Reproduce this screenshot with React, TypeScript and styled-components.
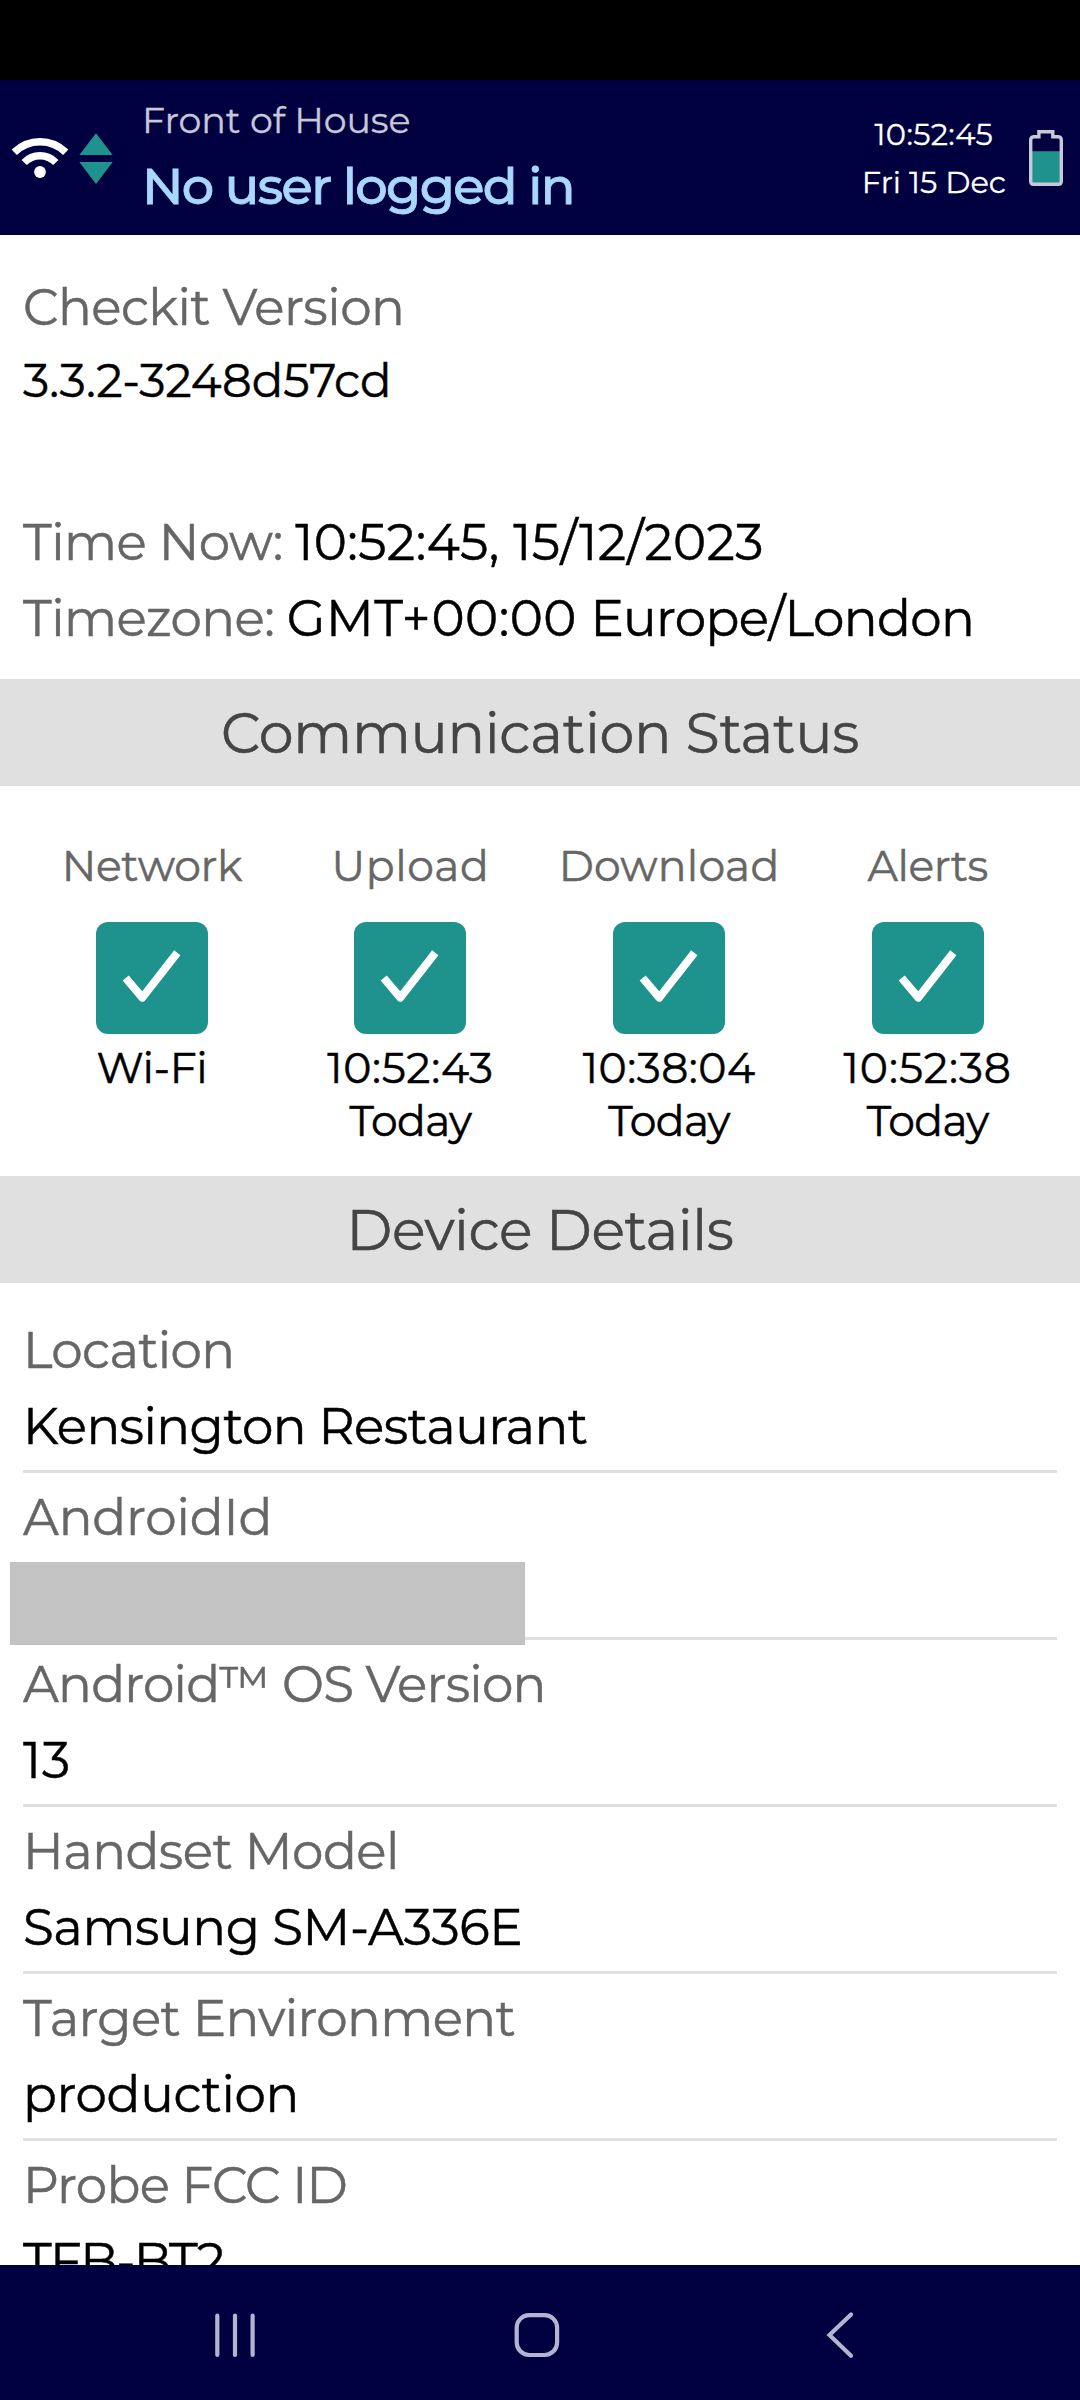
import React from "react";
import styled, { createGlobalStyle } from "styled-components";

const teal = "#1e938e";
const navy = "#000040";

const GlobalStyle = createGlobalStyle`
  *, *::before, *::after { box-sizing: border-box; }
  body {
    margin: 0;
    background: #fff;
    font-family: Montserrat, Inter, "Open Sans", sans-serif;
    font-weight: 400;
    -webkit-text-stroke: 0.5px currentColor;
  }
`;

const Screen = styled.div`
  display: flex;
  flex-direction: column;
  width: 1080px;
  height: 2400px;
  overflow: hidden;
  background: #fff;
`;

const StatusBar = styled.div`
  flex: none;
  height: 80px;
  background: #000;
`;

const Header = styled.header`
  flex: none;
  display: flex;
  align-items: flex-start;
  height: 155px;
  padding: 10px 17px 0 12px;
  background: ${navy};
  white-space: nowrap;
`;

const WifiIcon = styled.svg`
  flex: none;
  width: 56px;
  height: 41px;
  margin-top: 48px;
`;

const SyncIcon = styled.svg`
  flex: none;
  width: 34px;
  height: 51px;
  margin: 43px 0 0 11px;
`;

const BatteryIcon = styled.svg`
  flex: none;
  width: 34px;
  height: 56px;
  margin: 40px 0 0 23px;
`;

const Titles = styled.div`
  flex: 1;
  margin-left: 29px;
`;

const Site = styled.div`
  font-size: 36.4px;
  line-height: 60px;
  letter-spacing: -0.1px;
  color: #c8c8d8;
  -webkit-text-stroke-width: 0.3px;
`;

const User = styled.div`
  font-size: 51px;
  font-weight: 500;
  line-height: 72px;
  letter-spacing: -1.6px;
  color: #a8d8ff;
  -webkit-text-stroke-width: 0.8px;
`;

const Clock = styled.div`
  padding-top: 20px;
  text-align: center;
  font-size: 30.5px;
  line-height: 48px;
  color: #fff;
  -webkit-text-stroke-width: 0.3px;
`;

const Content = styled.main`
  flex: 1;
  min-height: 0;
  overflow: hidden;
`;

const Text = styled.span<{ $track?: number }>`
  letter-spacing: ${(p) => p.$track ?? 0}px;
`;

const Line = styled.div<{ $value?: boolean; $small?: boolean }>`
  font-size: ${(p) => (p.$small ? 46.6 : 50)}px;
  line-height: ${(p) => (p.$small ? 70 : 76)}px;
  color: ${(p) => (p.$value ? "#000" : "#666")};
  white-space: pre;
`;

const Summary = styled.section`
  height: 444px;
  padding: 35px 23px 0;
`;

const TimeBlock = styled.div`
  margin-top: 89px;
`;

const Black = styled(Text)`
  color: #000;
  -webkit-text-stroke-color: #000;
`;

const Band = styled.h2`
  display: flex;
  align-items: center;
  justify-content: center;
  height: 107px;
  margin: 0;
  background: #e0e0e0;
  color: #444;
  font-size: 55.5px;
  font-weight: 400;
`;

const StatusGrid = styled.section`
  display: grid;
  grid-template-columns: repeat(4, 1fr);
  height: 390px;
  padding: 54px 23px 0 22.6px;
`;

const StatusCell = styled.div`
  display: flex;
  flex-direction: column;
  align-items: center;
  font-size: 42.5px;
  line-height: 53px;
  color: #000;
`;

const StatusLabel = styled.div`
  height: 52px;
  line-height: 52px;
  color: #666;
`;

const Tick = styled.div`
  display: flex;
  width: 112px;
  height: 112px;
  margin: 30px 0 8px;
  border-radius: 12px;
  background: ${teal};
`;

const Details = styled.section`
  padding: 23px 23px 0;
`;

const DetailRow = styled.div`
  height: 167px;
  padding-top: 7px;
  border-bottom: 3px solid #e0e0e0;
`;

const Redacted = styled.div`
  position: relative;
  width: 515px;
  height: 83px;
  margin: 6px 0 0 -13px;
  background: #c3c3c3;
`;

const NavBar = styled.nav`
  flex: none;
  display: flex;
  align-items: flex-start;
  height: 135px;
  padding: 46px 226px 0 214px;
  background: ${navy};
`;

const NavIcon = styled.svg`
  flex: none;
  height: 48px;
  fill: none;
  stroke: #b4b4d2;
  stroke-width: 4.2;

  & + & {
    margin-left: 258px;
  }

  & + & + & {
    margin-left: 266px;
  }
`;

type T = [string, number];

const statuses: { label: T; lines: T[] }[] = [
  { label: ["Network", -0.3], lines: [["Wi-Fi", -0.3]] },
  { label: ["Upload", 0.6], lines: [["10:52:43", 0.7], ["Today", -0.6]] },
  { label: ["Download", 0.2], lines: [["10:38:04", 0.5], ["Today", -0.6]] },
  { label: ["Alerts", -0.5], lines: [["10:52:38", 1], ["Today", -0.6]] },
];

const details: { label: T; value?: T }[] = [
  { label: ["Location", -0.7], value: ["Kensington Restaurant", -0.58] },
  { label: ["AndroidId", -0.15] },
  { label: ["Android™ OS Version", -0.75], value: ["13", 1] },
  { label: ["Handset Model", -0.5], value: ["Samsung SM-A336E", -0.4] },
  { label: ["Target Environment", -0.62], value: ["production", -0.35] },
  { label: ["Probe FCC ID", -0.7], value: ["TFB-BT2", -1.6] },
];

export default function App() {
  return (
    <Screen>
      <GlobalStyle />
      <StatusBar />
      <Header>
        <WifiIcon viewBox="12 138 56 41">
          <g fill="none" stroke="#fff" strokeWidth="7.4">
            <path d="M14.3 152.3A36.5 36.5 0 0 1 65.7 152.3" />
            <path d="M24.2 162.5A22 22 0 0 1 55.8 162.5" />
          </g>
          <circle cx="40" cy="172" r="5.9" fill="#fff" />
        </WifiIcon>
        <SyncIcon viewBox="79 133 34 51" fill={teal}>
          <path d="M96 133.3L112.7 155H79.3ZM79.3 162H112.7L96 184Z" />
        </SyncIcon>
        <Titles>
          <Site>Front of House</Site>
          <User>No user logged in</User>
        </Titles>
        <Clock>
          <div><Text $track={0.35}>10:52:45</Text></div>
          <div>Fri 15 Dec</div>
        </Clock>
        <BatteryIcon viewBox="1029 130 34 56">
          <path fill={teal} d="M1031 151.3H1061V184H1031Z" />
          <path
            fill="none"
            stroke="#c8c8d8"
            strokeWidth="3.4"
            d="M1038.9 131.7H1052.8V136.7H1058.3Q1061.3 136.9 1061.3 140V181.2Q1061.3 184.2 1058.3 184.2H1033.7Q1030.7 184.2 1030.7 181.2V140Q1030.7 136.9 1033.7 136.7H1038.9Z"
          />
        </BatteryIcon>
      </Header>

      <Content>
        <Summary>
          <Line><Text $track={-0.5}>Checkit Version</Text></Line>
          <Line $value $small>3.3.2-3248d57cd</Line>
          <TimeBlock>
            <Line>
              <Text $track={-0.55}>Time Now: </Text>
              <Black $track={0.43}>10:52:45, 15/12/2023</Black>
            </Line>
            <Line>
              <Text $track={-0.55}>Timezone: </Text>
              <Black $track={0.5}>GMT+00:00 </Black>
              <Black $track={-0.6}>Europe/London</Black>
            </Line>
          </TimeBlock>
        </Summary>

        <Band><Text $track={-0.3}>Communication Status</Text></Band>
        <StatusGrid>
          {statuses.map((s) => (
            <StatusCell key={s.label[0]}>
              <StatusLabel><Text $track={s.label[1]}>{s.label[0]}</Text></StatusLabel>
              <Tick>
                <svg viewBox="0 0 112 112" fill="none" stroke="#fff" strokeWidth="8">
                  <path d="M29.7 56L46.3 75.6L81.3 30.7" strokeLinejoin="round" />
                </svg>
              </Tick>
              {s.lines.map(([text, track]) => (
                <div key={text}><Text $track={track}>{text}</Text></div>
              ))}
            </StatusCell>
          ))}
        </StatusGrid>

        <Band><Text $track={-0.45}>Device Details</Text></Band>
        <Details>
          {details.map(({ label, value }) => (
            <DetailRow key={label[0]}>
              <Line><Text $track={label[1]}>{label[0]}</Text></Line>
              {value ? (
                <Line $value><Text $track={value[1]}>{value[0]}</Text></Line>
              ) : (
                <Redacted />
              )}
            </DetailRow>
          ))}
        </Details>
      </Content>

      <NavBar>
        <NavIcon width="42" viewBox="214 2311 42 48" strokeLinecap="round">
          <path d="M217.3 2315.5V2355M235 2315.5V2355M252.6 2315.5V2355" />
        </NavIcon>
        <NavIcon width="46" viewBox="514 2311 46 48">
          <rect x="516.7" y="2315.2" width="40.4" height="39.8" rx="12.5" />
        </NavIcon>
        <NavIcon width="28" viewBox="826 2311 28 48" strokeLinecap="round">
          <path d="M851 2314.5L829.5 2335L851 2355.8" />
        </NavIcon>
      </NavBar>
    </Screen>
  );
}
